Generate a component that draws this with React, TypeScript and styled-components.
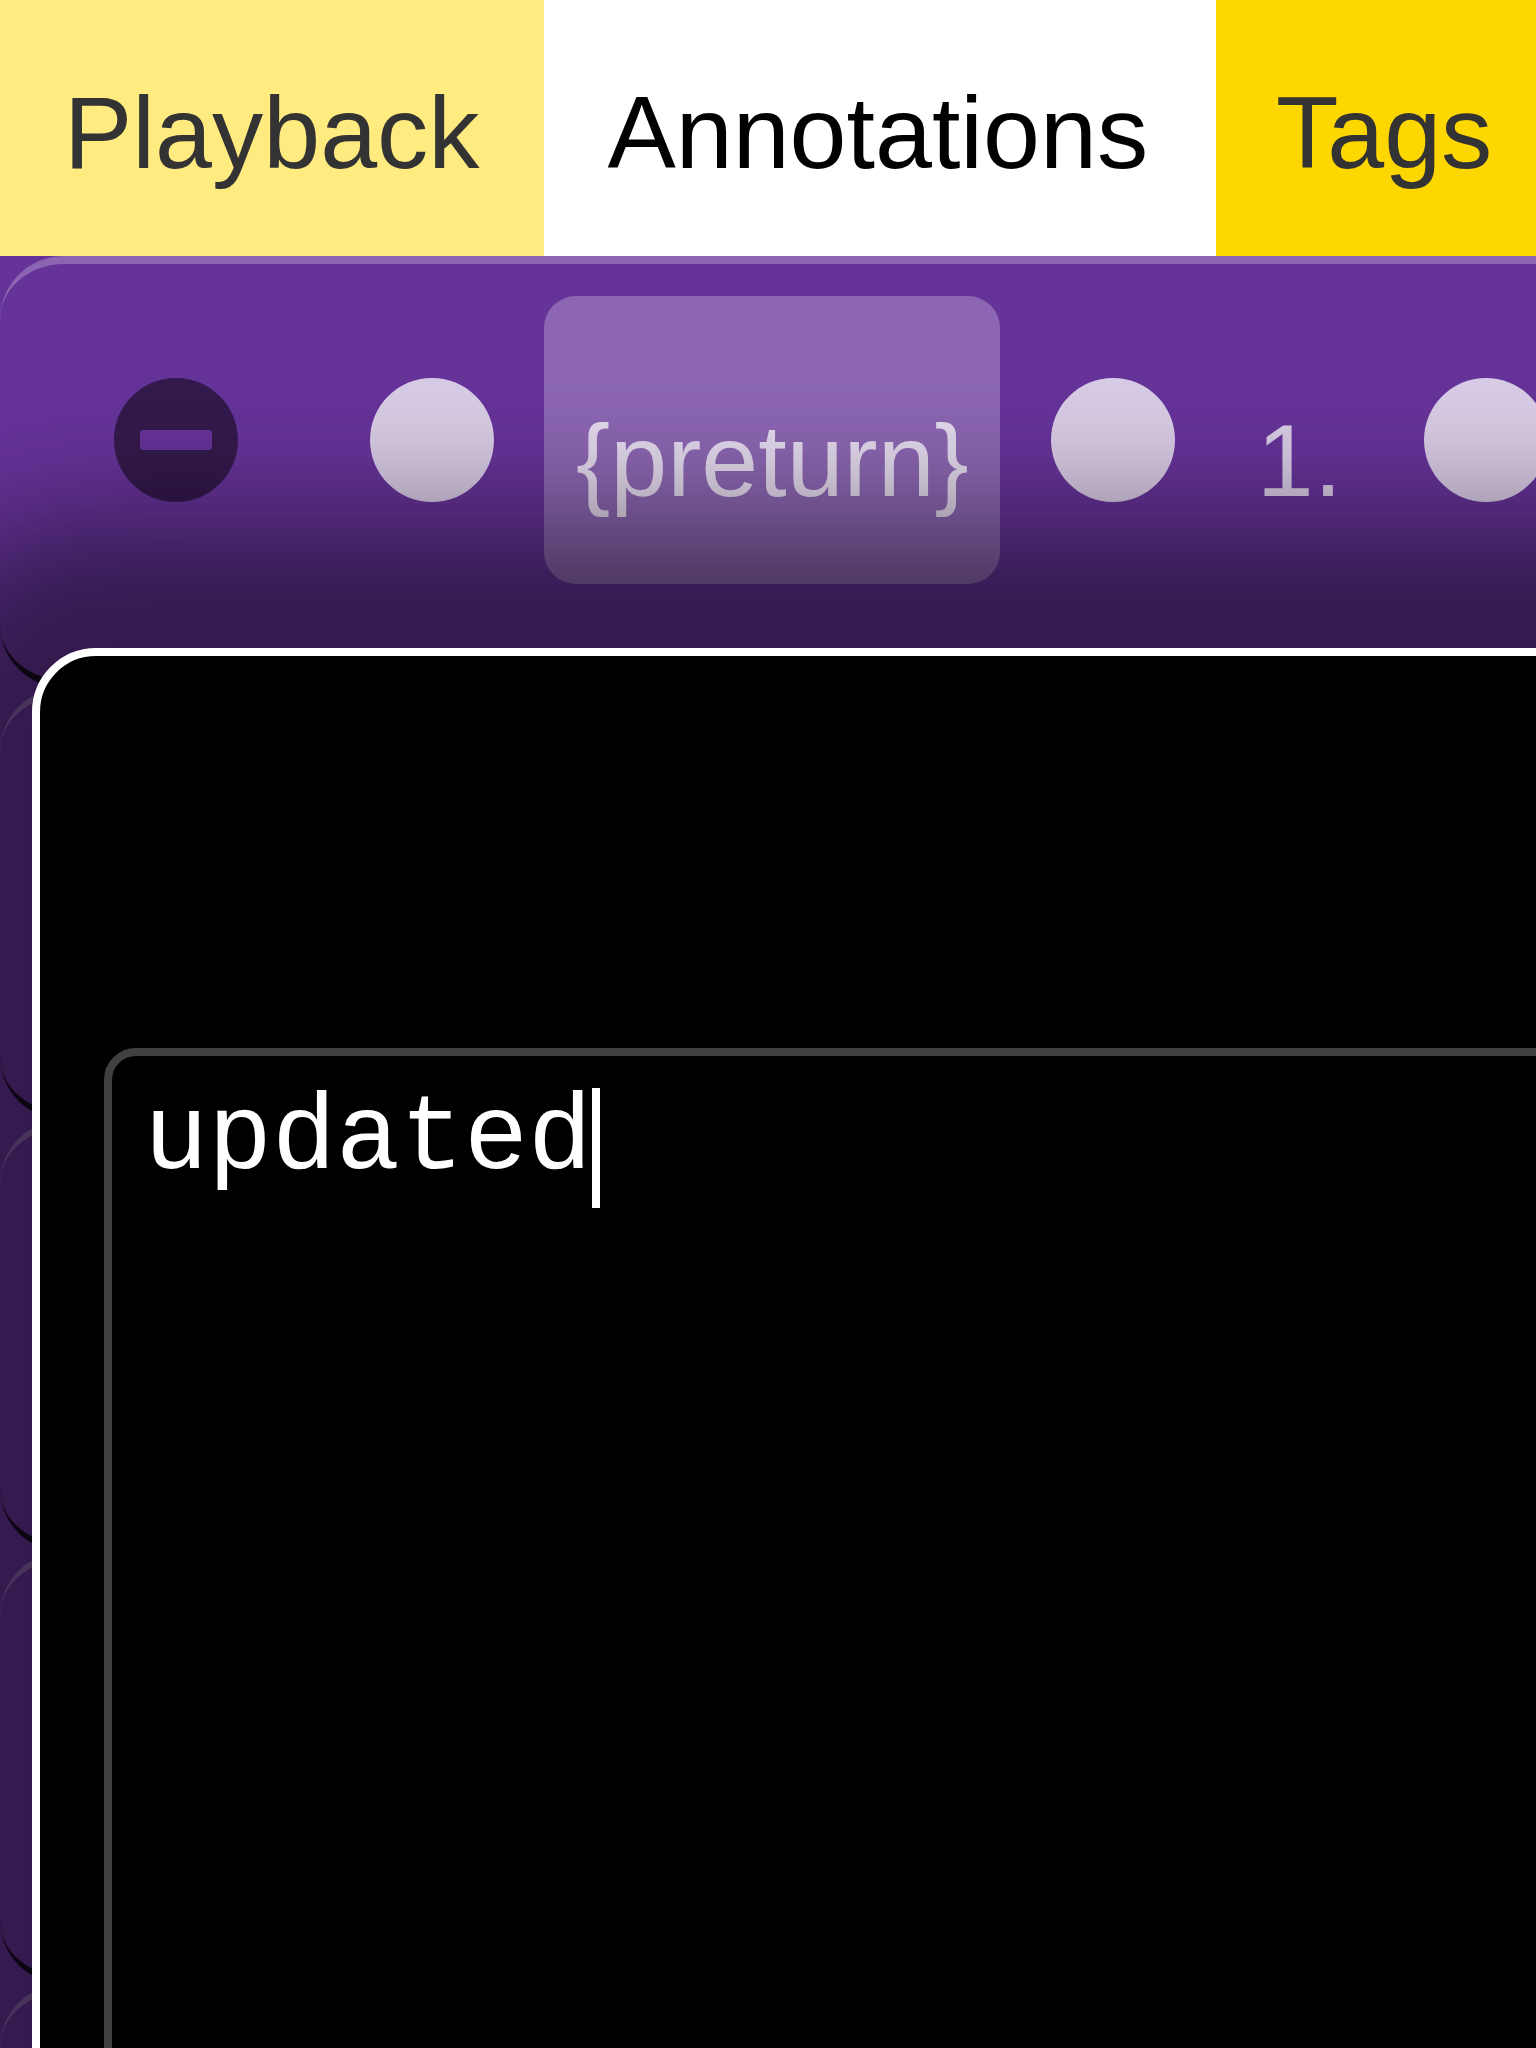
import React from "react";
import styled, { createGlobalStyle } from "styled-components";

const GlobalStyle = createGlobalStyle`
  *, *::before, *::after {
    box-sizing: border-box;
  }

  body {
    margin: 0;
    background: #663399;
  }
`;

const Page = styled.div`
  position: relative;
  display: flex;
  flex-direction: column;
  width: 1536px;
  height: 2048px;
  overflow: hidden;
  background: #663399;
  font-family: "Liberation Sans", Arial, sans-serif;
  font-size: 102.4px;
`;

const TabBar = styled.nav`
  display: flex;
  flex: none;
  height: 256px;
`;

const Tab = styled.div<{ $width: number; $inset: number; $background: string; $color: string }>`
  flex: none;
  width: ${(p) => p.$width}px;
  padding: 9px 0 0 ${(p) => p.$inset}px;
  background: ${(p) => p.$background};
  color: ${(p) => p.$color};
  line-height: 247px;
  white-space: nowrap;
`;

const Rows = styled.div`
  display: flex;
  flex-direction: column;
`;

const Row = styled.div`
  display: flex;
  flex: none;
  align-items: flex-start;
  width: 1800px;
  height: 432px;
  padding: 32px 64px;
  border-top: 8px solid rgba(255, 255, 255, 0.25);
  border-bottom: 8px solid rgba(0, 0, 0, 0.75);
  border-radius: 64px;
`;

const IconButton = styled.div<{ $color: string; $gap?: number }>`
  display: flex;
  flex: none;
  align-items: center;
  height: 288px;
  margin-right: ${(p) => p.$gap ?? 0}px;
  padding: 0 48px;
  color: ${(p) => p.$color};
`;

const Icon = styled.svg`
  display: block;
  width: 128px;
  height: 128px;
  fill: currentColor;
`;

const Label = styled.div<{ $width?: number; $active?: boolean }>`
  flex: none;
  width: ${(p) => (p.$width ? `${p.$width}px` : "auto")};
  height: 288px;
  margin-right: ${(p) => (p.$active ? 0.8 : 0)}px;
  padding: 41px 32px 0;
  border-radius: 32px;
  background: ${(p) => (p.$active ? "rgba(255, 255, 255, 0.25)" : "transparent")};
  color: rgba(255, 255, 255, 0.75);
  line-height: 248px;
  white-space: nowrap;
`;

const Dialog = styled.div`
  position: absolute;
  top: 648px;
  left: 32px;
  display: flex;
  flex-direction: column;
  width: 1700px;
  height: 1800px;
  padding: 392px 64px 64px;
  border: 8px solid #fff;
  border-radius: 64px;
  background: #000;
  box-shadow: 0 0 128px 128px rgba(0, 0, 0, 0.5);
`;

const Editor = styled.div`
  display: flex;
  flex: 1;
  align-items: flex-start;
  padding: 32px;
  border: 8px solid #404040;
  border-radius: 32px;
  color: #fff;
  font-family: "Liberation Mono", "Courier New", monospace;
  font-size: 106.667px;
  line-height: 104px;
`;

const Caret = styled.span`
  width: 8px;
  height: 120px;
  background: #fff;
`;

const LIGHT = "rgba(255, 255, 255, 0.75)";

function CircleIcon() {
  return (
    <Icon viewBox="0 0 512 512">
      <path d="M256 8C119 8 8 119 8 256s111 248 248 248 248-111 248-248S393 8 256 8z" />
    </Icon>
  );
}

function MinusCircleIcon() {
  return (
    <Icon viewBox="0 0 512 512">
      <path d="M256 8C119 8 8 119 8 256s111 248 248 248 248-111 248-248S393 8 256 8zM124 296c-6.6 0-12-5.4-12-12v-56c0-6.6 5.4-12 12-12h264c6.6 0 12 5.4 12 12v56c0 6.6-5.4 12-12 12H124z" />
    </Icon>
  );
}

export default function App() {
  return (
    <>
      <GlobalStyle />
      <Page>
        <TabBar>
          <Tab $width={544} $inset={64} $background="#ffeb80" $color="#333">Playback</Tab>
          <Tab $width={672} $inset={63.4} $background="#fff" $color="#000">Annotations</Tab>
          <Tab $width={336} $inset={60} $background="#ffd700" $color="#333">Tags</Tab>
        </TabBar>
        <Rows>
          <Row>
            <IconButton $color="rgba(0, 0, 0, 0.5)" $gap={32}>
              <MinusCircleIcon />
            </IconButton>
            <IconButton $color={LIGHT}>
              <CircleIcon />
            </IconButton>
            <Label $active $width={456}>{"{preturn}"}</Label>
            <IconButton $color={LIGHT}>
              <CircleIcon />
            </IconButton>
            <Label>1.</Label>
            <IconButton $color={LIGHT}>
              <CircleIcon />
            </IconButton>
          </Row>
          <Row />
          <Row />
          <Row />
          <Row />
        </Rows>
        <Dialog>
          <Editor>
            updated
            <Caret />
          </Editor>
        </Dialog>
      </Page>
    </>
  );
}
